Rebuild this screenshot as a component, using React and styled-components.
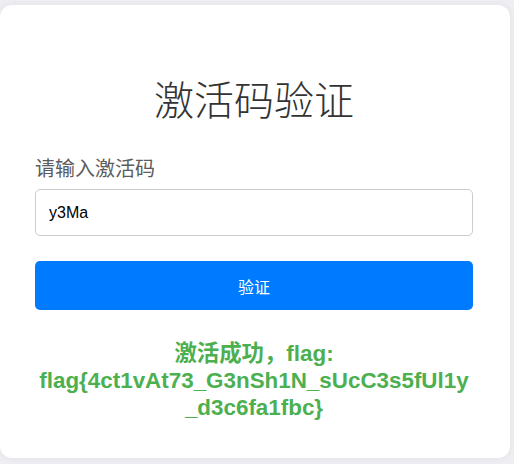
import React, { useState } from "react";
import styled, { createGlobalStyle } from "styled-components";

const GlobalStyle = createGlobalStyle`
  * { box-sizing: border-box; }
  body {
    margin: 0;
    background: #eeeef3;
    font-family: "Liberation Sans", Arial, "Noto Sans CJK SC", sans-serif;
  }
`;

const App = () => {
  const [code, setCode] = useState("y3Ma");
  const flag = "flag{4ct1vAt73_G3nSh1N_sUcC3s5fUl1y_d3c6fa1fbc}";

  return (
    <>
      <GlobalStyle />
      <Page>
        <Card>
          <Title>激活码验证</Title>
          <Label htmlFor="code">请输入激活码</Label>
          <Input id="code" value={code} onChange={(e) => setCode(e.target.value)} />
          <Button type="button">验证</Button>
          <Result>激活成功，flag: {flag}</Result>
        </Card>
      </Page>
    </>
  );
};

export default App;

const Page = styled.div`
  padding: 5px 4px 6px 0;
`;

const Card = styled.div`
  background: #fff;
  border-radius: 12px;
  box-shadow: 0 0 8px rgba(0, 0, 0, 0.06);
  padding: 69px 37px 37px 35px;
  display: flex;
  flex-direction: column;
`;

const Title = styled.h1`
  margin: 0 0 34px;
  text-align: center;
  font-family: "Noto Sans CJK SC", sans-serif;
  font-size: 40px;
  font-weight: 300;
  line-height: 48px;
  color: #333;
`;

const Label = styled.label`
  font-family: "Noto Sans CJK SC", sans-serif;
  font-size: 20px;
  line-height: 24px;
  color: #5c5c5c;
  margin-bottom: 9px;
`;

const Input = styled.input`
  height: 47px;
  padding: 0 13px;
  border: 1px solid #ccc;
  border-radius: 5px;
  font-family: "Liberation Sans", Arial, sans-serif;
  font-size: 16px;
  color: #000;
  outline: none;
  margin-bottom: 25px;
`;

const Button = styled.button`
  height: 49px;
  border: none;
  border-radius: 5px;
  background: #007bff;
  color: #fff;
  font-family: "Noto Sans CJK SC", sans-serif;
  font-size: 16px;
  cursor: pointer;
  margin-bottom: 30px;
`;

const Result = styled.p`
  margin: 0;
  text-align: center;
  color: #4caf50;
  font-weight: bold;
  font-size: 22.4px;
  line-height: 27px;
  overflow-wrap: break-word;
`;
